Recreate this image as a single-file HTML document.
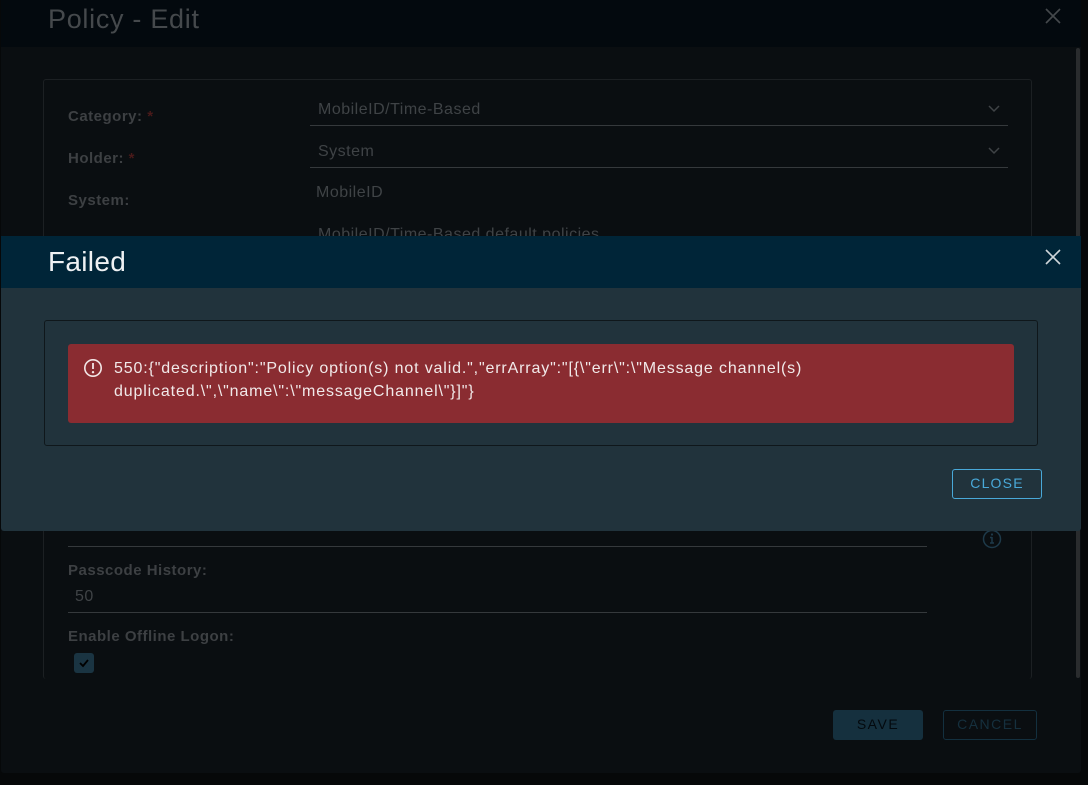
<!DOCTYPE html>
<html><head><meta charset="utf-8"><style>
*{margin:0;padding:0;box-sizing:border-box}
body{width:1088px;height:785px;background:#060809;position:relative;overflow:hidden;font-family:"Liberation Sans",sans-serif}
.a{position:absolute}
.lbl{color:#3d4043;font-weight:bold;font-size:15px;letter-spacing:0.5px}
.val{color:#3f4346;font-size:16px;letter-spacing:0.5px}
.line{height:1px;background:#35393c}
</style></head><body>
<div class="a" style="left:1px;top:0;width:1080px;height:773px;background:#0a0e11;border-radius:0 0 3px 3px"></div>
<div class="a" style="left:1px;top:0;width:1080px;height:47px;background:#03090e"></div>
<div class="a" style="left:48px;top:4px;font-size:27px;letter-spacing:0.7px;color:#45494c">Policy - Edit</div>
<svg class="a" style="left:1045px;top:8px" width="16" height="16"><path d="M1 1L15 15M15 1L1 15" stroke="#45494c" stroke-width="1.6"/></svg>
<div class="a" style="left:1076px;top:48px;width:4px;height:630px;background:#2a2c2e;border-radius:2px"></div>
<div class="a" style="left:43px;top:79px;width:989px;height:600px;border:1px solid #1c2023;border-bottom:none;border-radius:3px"></div>
<div class="a lbl" style="left:68px;top:108px">Category: <span style="color:#4a1a1a">*</span></div>
<div class="a val" style="left:318px;top:101px">MobileID/Time-Based</div>
<div class="a line" style="left:310px;top:125px;width:698px"></div>
<svg class="a" style="left:988px;top:105px" width="12" height="8"><path d="M1 1L6 6L11 1" stroke="#3f4346" fill="none" stroke-width="1.5"/></svg>
<div class="a lbl" style="left:68px;top:150px">Holder: <span style="color:#4a1a1a">*</span></div>
<div class="a val" style="left:318px;top:143px">System</div>
<div class="a line" style="left:310px;top:167px;width:698px"></div>
<svg class="a" style="left:988px;top:147px" width="12" height="8"><path d="M1 1L6 6L11 1" stroke="#3f4346" fill="none" stroke-width="1.5"/></svg>
<div class="a lbl" style="left:68px;top:192px">System:</div>
<div class="a val" style="left:316px;top:184px">MobileID</div>
<div class="a val" style="left:318px;top:226px">MobileID/Time-Based default policies</div>
<div class="a line" style="left:68px;top:546px;width:859px"></div>
<svg class="a" style="left:982px;top:529px" width="20" height="20"><circle cx="10" cy="10" r="8.5" stroke="#1e3a4a" stroke-width="1.5" fill="none"/><path d="M10 8v6M8 14h4M8 8.5h2" stroke="#1e3a4a" stroke-width="1.5"/><circle cx="10" cy="5.5" r="1.1" fill="#1e3a4a"/></svg>
<div class="a lbl" style="left:68px;top:562px">Passcode History:</div>
<div class="a val" style="left:75px;top:588px">50</div>
<div class="a line" style="left:68px;top:612px;width:859px"></div>
<div class="a lbl" style="left:68px;top:628px">Enable Offline Logon:</div>
<div class="a" style="left:74px;top:653px;width:20px;height:20px;background:#1a3442;border-radius:3px"></div>
<svg class="a" style="left:78px;top:657px" width="12" height="12"><path d="M2 6L5 9L10 3" stroke="#000" stroke-width="1.8" fill="none"/></svg>
<div class="a" style="left:833px;top:710px;width:90px;height:30px;background:#15303e;border-radius:3px;color:#03090e;font-size:14px;letter-spacing:1.5px;text-align:center;line-height:29px">SAVE</div>
<div class="a" style="left:943px;top:710px;width:94px;height:30px;border:1px solid #13303f;border-radius:3px;color:#15303e;font-size:14px;letter-spacing:1.5px;text-align:center;line-height:27px">CANCEL</div>

<div class="a" style="left:1px;top:236px;width:1080px;height:295px;background:#21333c;border-radius:0 0 3px 3px"></div>
<div class="a" style="left:1px;top:236px;width:1080px;height:52px;background:#002538"></div>
<div class="a" style="left:48px;top:246px;font-size:28px;letter-spacing:0.3px;color:#eef1f3">Failed</div>
<svg class="a" style="left:1045px;top:249px" width="16" height="16"><path d="M1 1L15 15M15 1L1 15" stroke="#cfd6da" stroke-width="1.6"/></svg>
<div class="a" style="left:44px;top:320px;width:994px;height:126px;border:1px solid #0f171b;border-radius:3px"></div>
<div class="a" style="left:68px;top:344px;width:946px;height:79px;background:#8a2c31;border-radius:3px"></div>
<svg class="a" style="left:83px;top:358px" width="20" height="20"><circle cx="10" cy="10" r="8.2" stroke="#f2e6e6" stroke-width="1.6" fill="none"/><path d="M10 5v6" stroke="#f2e6e6" stroke-width="1.8"/><circle cx="10" cy="14.2" r="1.2" fill="#f2e6e6"/></svg>
<div class="a" style="left:114px;top:357px;width:890px;font-size:16px;letter-spacing:0.85px;line-height:23px;color:#f1e9e9">550:{"description":"Policy option(s) not valid.","errArray":"[{\"err\":\"Message channel(s) duplicated.\",\"name\":\"messageChannel\"}]"}</div>
<div class="a" style="left:952px;top:469px;width:90px;height:30px;border:1px solid #49a9d9;border-radius:3px;color:#49a9d9;font-size:14px;letter-spacing:1.2px;text-align:center;line-height:27px">CLOSE</div>
</body></html>
